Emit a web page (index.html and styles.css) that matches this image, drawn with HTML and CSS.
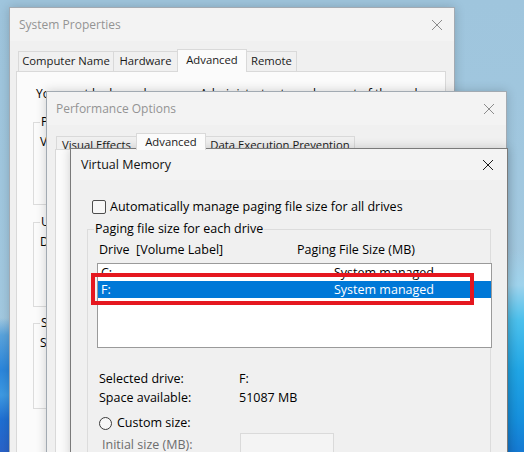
FILE: index.html
```html
<!DOCTYPE html>
<html lang="en">
<head>
<meta charset="utf-8">
<title>Virtual Memory</title>
<link rel="stylesheet" href="styles.css">
</head>
<body>
<div class="desktop">
  <div class="win win-sp">
    <div class="titlebar">
      <span class="title">System Properties</span>
      <span class="close"><svg viewBox="0 0 12 12"><path d="M1 1L11 11M11 1L1 11"/></svg></span>
    </div>
    <div class="winbody sp-body">
      <div class="tabs">
        <div class="tab t-cn">Computer Name</div>
        <div class="tab t-hw">Hardware</div>
        <div class="tab sel t-adv">Advanced</div>
        <div class="tab t-rem">Remote</div>
      </div>
      <div class="panel sp-panel">
        <p class="note">You must be logged on as an Administrator to make most of these changes.</p>
        <div class="gbox g1">
          <span class="glabel">Performance</span>
          <p class="gtext">Visual effects, processor scheduling, memory usage, and virtual memory</p>
        </div>
        <div class="gbox g2">
          <span class="glabel">User Profiles</span>
          <p class="gtext">Desktop settings related to your sign-in</p>
        </div>
        <div class="gbox g3">
          <span class="glabel">Startup and Recovery</span>
          <p class="gtext">System startup, system failure, and debugging information</p>
        </div>
      </div>
    </div>
  </div>

  <div class="win win-po">
    <div class="titlebar">
      <span class="title">Performance Options</span>
      <span class="close"><svg viewBox="0 0 12 12"><path d="M1 1L11 11M11 1L1 11"/></svg></span>
    </div>
    <div class="winbody po-body">
      <div class="tabs po-tabs">
        <div class="tab t-ve">Visual Effects</div>
        <div class="tab sel t-padv">Advanced</div>
        <div class="tab t-dep">Data Execution Prevention</div>
      </div>
      <div class="panel po-panel"></div>
    </div>
  </div>

  <div class="win win-vm">
    <div class="titlebar vm-titlebar">
      <span class="title">Virtual Memory</span>
      <span class="close"><svg viewBox="0 0 12 12"><path d="M1 1L11 11M11 1L1 11"/></svg></span>
    </div>
    <div class="winbody vm-body">
      <div class="check-row">
        <span class="checkbox"></span>
        <span class="check-label">Automatically manage paging file size for all drives</span>
      </div>
      <div class="gbox vm-group">
        <span class="glabel vm-glabel">Paging file size for each drive</span>
        <div class="list-head">
          <span class="col-drive">Drive&nbsp; [Volume Label]</span>
          <span>Paging File Size (MB)</span>
        </div>
        <div class="listbox">
          <div class="row"><span class="cell-drive">C:</span><span>System managed</span></div>
          <div class="row sel"><span class="cell-drive">F:</span><span>System managed</span></div>
        </div>
        <div class="info">
          <div class="info-row"><span class="info-key">Selected drive:</span><span>F:</span></div>
          <div class="info-row"><span class="info-key">Space available:</span><span>51087 MB</span></div>
        </div>
        <div class="radio-row">
          <span class="radio"></span>
          <span class="radio-label">Custom size:</span>
        </div>
        <div class="field-row">
          <span class="field-label">Initial size (MB):</span>
          <span class="field-input"></span>
        </div>
      </div>
    </div>
  </div>

  <div class="highlight"></div>
</div>
</body>
</html>
```

FILE: styles.css
```css
* { box-sizing: border-box; }
html, body { margin: 0; padding: 0; }
body {
  width: 524px;
  height: 452px;
  overflow: hidden;
  font-family: "Open Sans", "Noto Sans", sans-serif;
  font-size: 12px;
  color: #000;
}
p { margin: 0; }

.desktop {
  position: relative;
  width: 524px;
  height: 452px;
  overflow: hidden;
  background:
    linear-gradient(to bottom, rgba(0,0,0,0) 318px, #5aa4dd 335px, #2b86dc 370px, #3e9ae3 395px, #1f6fd3 420px, #2a63c9 452px) left top / 9px 452px no-repeat,
    linear-gradient(to bottom, rgba(0,0,0,0) 250px, #9fd3ec 285px, #4cc0ec 320px, #21a5e4 370px, #168fdc 420px, #1579d2 452px) right top / 17px 452px no-repeat,
    linear-gradient(to bottom, #9fc5dd, #a4cbe2);
}

.win {
  position: absolute;
  display: flex;
  flex-direction: column;
  background: #f0f0f0;
  border: 1px solid #a2aab2;
  box-shadow: 0 0 10px rgba(0, 0, 0, 0.18);
}
.win-sp { left: 9px; top: 7px; width: 446px; height: 470px; }
.win-po { left: 46px; top: 91px; width: 461px; height: 390px; }
.win-vm { left: 70px; top: 148px; width: 438px; height: 330px; border-color: #7a7a7a; font-size: 12.5px; }

.titlebar {
  flex: none;
  display: flex;
  align-items: center;
  justify-content: space-between;
  height: 33px;
  padding-left: 9px;
  background: #f3f3f3;
}
.title { color: #939393; line-height: 16px; }
.close {
  width: 34px;
  height: 100%;
  display: flex;
  align-items: center;
  justify-content: center;
}
.close svg { width: 12px; height: 12px; fill: none; stroke: #8c8c8c; stroke-width: 1; }
.vm-titlebar { height: 31px; padding-left: 10px; }
.vm-titlebar .title { color: #111; }
.vm-titlebar .close { width: 38px; }
.vm-titlebar .close svg { stroke: #1a1a1a; }

.winbody { flex: 1; display: flex; flex-direction: column; }
.sp-body { padding: 8px 8px 0 6px; }
.po-body { padding: 8px 8px 0 8px; }

.tabs { display: flex; align-items: flex-end; padding-left: 3px; flex: none; font-size: 11.3px; }
.tab {
  height: 20px;
  line-height: 18px;
  text-align: center;
  border: 1px solid #d9d9d9;
  border-bottom: none;
  margin-left: -1px;
  background: #f0f0f0;
  color: #1a1a1a;
  white-space: nowrap;
}
.tab.sel {
  height: 23px;
  line-height: 20px;
  background: #fbfbfb;
  margin-bottom: -1px;
  position: relative;
  z-index: 1;
}
.t-cn { width: 96px; }
.t-hw { width: 65px; }
.t-adv { width: 70px; }
.t-rem { width: 51px; }

.po-tabs { padding-left: 2px; }
.po-tabs .tab { height: 13px; line-height: 16px; overflow: hidden; }
.po-tabs .tab.sel { height: 17px; line-height: 16px; }
.t-ve { width: 81px; }
.t-padv { width: 70px; }
.t-dep { width: 150px; }

.panel {
  flex: 1;
  border: 1px solid #d9d9d9;
  background: #fbfbfb;
}
.sp-panel { padding: 14px 16px 0 16px; }
.note { padding-left: 3px; line-height: 16px; white-space: nowrap; }

.gbox { border: 1px solid #dcdcdc; }
.glabel {
  display: block;
  width: max-content;
  margin: -9px 0 0 6px;
  padding: 0 1px;
  line-height: 16px;
  background: #fbfbfb;
}
.gtext { padding-left: 6px; line-height: 16px; margin-top: 4px; white-space: nowrap; }
.g1 { margin-top: 20px; height: 83px; }
.g2 { margin-top: 17px; height: 85px; }
.g3 { margin-top: 16px; height: 86px; }

.vm-body { padding-top: 20px; }
.check-row { display: flex; align-items: center; height: 14px; margin-left: 21px; }
.checkbox {
  width: 14px;
  height: 14px;
  border: 1px solid #4d4d4d;
  border-radius: 2px;
  background: #f7f7f7;
  flex: none;
}
.check-label { margin-left: 4px; line-height: 16px; white-space: nowrap; }

.vm-group {
  margin: 15px 16px 0 16px;
  padding-left: 9px;
  height: 260px;
}
.vm-glabel { margin-left: -3px; background: #f0f0f0; }

.list-head { display: flex; margin-top: 5px; padding-left: 2px; line-height: 16px; }
.col-drive { width: 198px; flex: none; }

.listbox {
  margin: 5px -2px 0 0;
  height: 85px;
  border: 1px solid #9a9a9a;
  background: #fff;
}
.row { display: flex; height: 17px; line-height: 17px; padding-left: 3px; white-space: nowrap; }
.row.sel { background: #0078d7; color: #fff; }
.cell-drive { width: 233px; flex: none; }

.info { margin-top: 21px; padding-left: 2px; }
.info-row { display: flex; line-height: 19px; }
.info-key { width: 140px; flex: none; }

.radio-row { display: flex; align-items: center; height: 16px; margin-top: 8px; padding-left: 2px; }
.radio {
  width: 13px;
  height: 13px;
  border: 1px solid #3a3a3a;
  border-radius: 50%;
  background: #f7f7f7;
  flex: none;
}
.radio-label { margin-left: 5px; line-height: 16px; }

.field-row { display: flex; align-items: center; height: 24px; margin-top: 2px; padding-left: 5px; }
.field-label { width: 138px; flex: none; color: #6d6d6d; line-height: 16px; }
.field-input {
  width: 94px;
  height: 24px;
  border: 1px solid #dadada;
  background: #f4f4f4;
}

.highlight {
  position: absolute;
  left: 91px;
  top: 273px;
  width: 383px;
  height: 32px;
  border: 4px solid #e5171f;
}
```
